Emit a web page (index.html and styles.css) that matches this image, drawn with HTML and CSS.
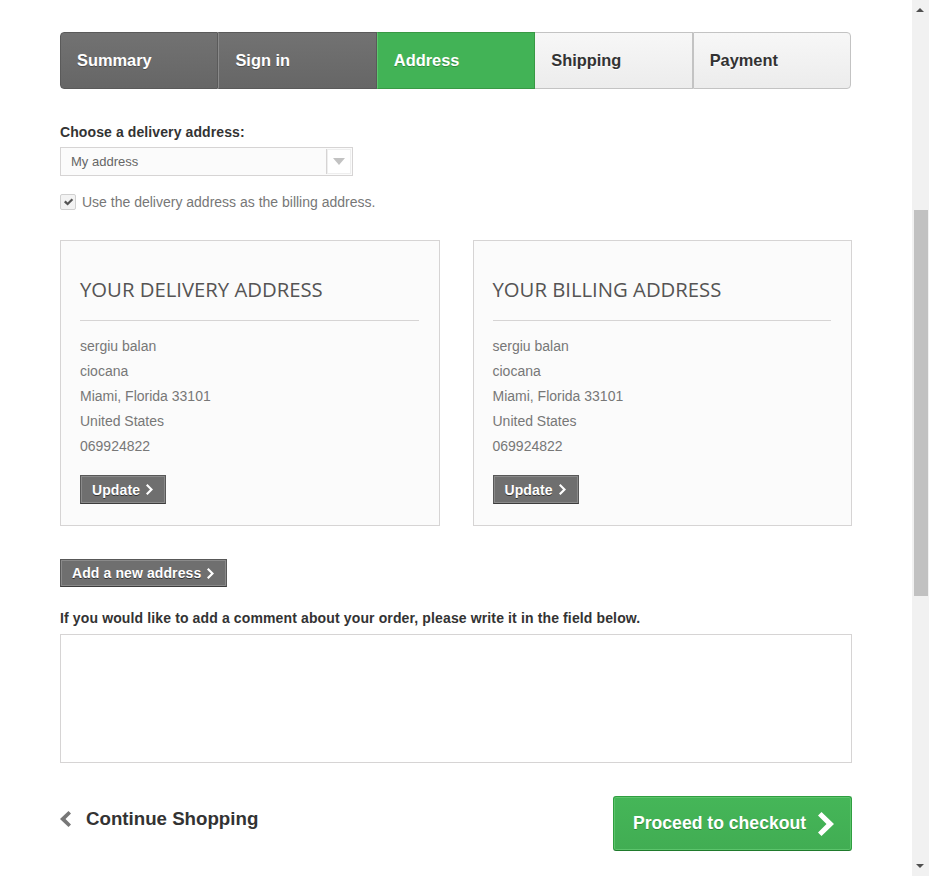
FILE: index.html
```html
<!DOCTYPE html>
<html>
<head>
<meta charset="utf-8">
<link rel="stylesheet" href="styles.css">
</head>
<body>
<div class="page">
  <ul class="steps">
    <li class="step done first">Summary</li>
    <li class="step done">Sign in</li>
    <li class="step current">Address</li>
    <li class="step todo">Shipping</li>
    <li class="step todo last">Payment</li>
  </ul>

  <label class="label">Choose a delivery address:</label>
  <div class="select">
    <span class="select-text">My address</span>
    <span class="select-arrow"><svg width="12" height="7" viewBox="0 0 12 7"><path d="M0 0h12L6 7z" fill="#c2c2c2"/></svg></span>
  </div>
  <div class="check-row">
    <span class="checkbox"><svg width="11" height="10" viewBox="0 0 11 10"><path d="M1 5.2l1.6-1.6 2 2L8.6 1.4 10.2 3 4.6 8.6z" fill="#555"/></svg></span>
    <span class="check-text">Use the delivery address as the billing address.</span>
  </div>

  <div class="addresses">
    <div class="addr-box">
      <h3 class="addr-title">Your delivery address</h3>
      <ul class="addr-lines">
        <li>sergiu balan</li>
        <li>ciocana</li>
        <li>Miami, Florida 33101</li>
        <li>United States</li>
        <li>069924822</li>
      </ul>
      <a class="btn-dark">Update <svg class="chev" width="8" height="11" viewBox="0 0 8 11"><path d="M1.5 0L0 1.5 4 5.5 0 9.5 1.5 11 7 5.5z" fill="#fff"/></svg></a>
    </div>
    <div class="addr-box">
      <h3 class="addr-title">Your billing address</h3>
      <ul class="addr-lines">
        <li>sergiu balan</li>
        <li>ciocana</li>
        <li>Miami, Florida 33101</li>
        <li>United States</li>
        <li>069924822</li>
      </ul>
      <a class="btn-dark">Update <svg class="chev" width="8" height="11" viewBox="0 0 8 11"><path d="M1.5 0L0 1.5 4 5.5 0 9.5 1.5 11 7 5.5z" fill="#fff"/></svg></a>
    </div>
  </div>

  <a class="btn-dark add-btn">Add a new address <svg class="chev" width="8" height="11" viewBox="0 0 8 11"><path d="M1.5 0L0 1.5 4 5.5 0 9.5 1.5 11 7 5.5z" fill="#fff"/></svg></a>

  <p class="comment-label">If you would like to add a comment about your order, please write it in the field below.</p>
  <div class="textarea"></div>

  <div class="footer">
    <a class="continue"><svg width="11" height="16" viewBox="0 0 11 16"><path d="M8.5 0L11 2.5 5.5 8 11 13.5 8.5 16 0 8z" fill="#777"/></svg><span>Continue Shopping</span></a>
    <a class="proceed">Proceed to checkout <svg width="16" height="24" viewBox="0 0 16 24"><path d="M3.5 0L0 3.5 8.5 12 0 20.5 3.5 24 16 12z" fill="#fff"/></svg></a>
  </div>
</div>

<div class="scrollbar">
  <span class="sb-up"></span>
  <span class="sb-thumb"></span>
  <span class="sb-down"></span>
</div>
</body>
</html>
```

FILE: styles.css
```css
html, body {
  margin: 0;
  padding: 0;
  overflow: hidden;
  background: #fff;
}
body {
  font-family: "Liberation Sans", Arial, sans-serif;
  font-size: 14px;
  color: #777;
  width: 912px;
  height: 876px;
}
.page {
  width: 792px;
  margin: 0 0 0 60px;
  padding-top: 32px;
}
.steps {
  list-style: none;
  margin: 0 1px 35px 0;
  padding: 0;
  display: flex;
  height: 57px;
}
.step {
  flex: 1;
  box-sizing: border-box;
  height: 57px;
  display: flex;
  align-items: center;
  padding-left: 16px;
  font-weight: bold;
  font-size: 16.4px;
}
.step.done {
  background: linear-gradient(#727272, #666);
  border: 1px solid #5a5a5a;
  border-left-color: #8a8a8a;
  color: #fff;
  text-shadow: 0 1px 0 #4a4a4a;
}
.step.first {
  border-left-color: #5a5a5a;
  border-radius: 4px 0 0 4px;
}
.step.current {
  background: #42b356;
  border: 1px solid #389944;
  border-left-color: #5fc46f;
  color: #fff;
  text-shadow: 0 1px 0 #2f8a3c;
}
.step.todo {
  background: linear-gradient(#f7f7f7, #ececec);
  border: 1px solid #c3c3c3;
  color: #333;
  text-shadow: 0 1px 0 #fff;
}
.step.current + .step.todo {
  border-left: 0;
}
.step.last {
  border-radius: 0 4px 4px 0;
}

.label {
  display: block;
  font-weight: bold;
  font-size: 14px;
  color: #333;
  margin: 0 0 6px;
  line-height: 17px;
  letter-spacing: 0.1px;
}
.select {
  width: 293px;
  height: 29px;
  box-sizing: border-box;
  border: 1px solid #d6d4d4;
  background: #fbfbfb;
  display: flex;
  align-items: center;
  justify-content: space-between;
}
.select-text {
  padding-left: 10px;
  font-size: 13px;
  color: #666;
}
.select-arrow {
  width: 25px;
  height: 25px;
  margin-right: 1px;
  box-sizing: border-box;
  border-left: 1px solid #d6d4d4;
  background: #fff;
  display: flex;
  align-items: center;
  justify-content: center;
  box-shadow: inset 0 0 0 1px #eee;
}
.check-row {
  display: flex;
  align-items: center;
  margin: 18px 0 0;
  height: 16px;
}
.checkbox {
  width: 14px;
  height: 14px;
  border: 1px solid #d0d0d0;
  border-radius: 2px;
  background: #f3f3f3;
  display: flex;
  align-items: center;
  justify-content: center;
  margin-right: 6px;
}
.check-text {
  color: #777;
  font-size: 14px;
}

.addresses {
  display: flex;
  gap: 33px;
  margin: 30px 0 0;
}
.addr-box {
  flex: 1;
  height: 286px;
  box-sizing: border-box;
  background: #fbfbfb;
  border: 1px solid #d6d4d4;
  padding: 35px 20px 0 19px;
}
.addr-title {
  margin: 0;
  font-family: "Open Sans", "Liberation Sans", sans-serif;
  font-weight: 400;
  font-size: 20.3px;
  text-transform: uppercase;
  color: #555454;
  line-height: 26px;
  padding-bottom: 18px;
  border-bottom: 1px solid #d6d4d4;
  margin-bottom: 13px;
}
.addr-lines {
  list-style: none;
  margin: 0 0 16px;
  padding: 0;
  line-height: 25px;
  font-size: 14px;
  color: #777;
}
.btn-dark {
  display: inline-flex;
  align-items: center;
  gap: 6px;
  box-sizing: border-box;
  height: 29px;
  padding: 0 11px;
  background: #6f6f6f;
  border: 1px solid #585858;
  box-shadow: inset 0 0 0 1px #8a8a8a;
  border-bottom-color: #3c3c3c;
  color: #fff;
  font-weight: bold;
  font-size: 14px;
  letter-spacing: 0.1px;
  text-shadow: 0 1px 0 #333;
}
.add-btn {
  margin: 33px 0 0;
  height: 28px;
  padding: 0 11px;
}
.comment-label {
  margin: 23px 0 7px;
  font-weight: bold;
  color: #333;
  font-size: 14px;
  line-height: 17px;
  letter-spacing: 0.13px;
}
.textarea {
  height: 129px;
  box-sizing: border-box;
  border: 1px solid #d6d4d4;
  background: #fff;
}
.footer {
  display: flex;
  justify-content: space-between;
  align-items: center;
  margin: 33px 0 0;
}
.continue {
  display: flex;
  align-items: center;
  gap: 15px;
  font-size: 18.7px;
  font-weight: bold;
  color: #333;
  margin-top: -9px;
}
.proceed {
  display: flex;
  align-items: center;
  gap: 12px;
  box-sizing: border-box;
  width: 239px;
  height: 55px;
  padding-left: 19px;
  background: linear-gradient(#45b658, #41ad53);
  border: 1px solid #2f9e40;
  border-bottom-color: #1f7a2c;
  box-shadow: inset 0 0 0 1px #5cc46c;
  border-radius: 3px;
  color: #fff;
  font-weight: bold;
  font-size: 17.6px;
  text-shadow: 0 1px 0 #2b8a38;
}

.scrollbar {
  position: fixed;
  top: 0;
  right: 0;
  width: 17px;
  height: 876px;
  background: #f1f1f1;
}
.sb-up, .sb-down {
  position: absolute;
  left: 4px;
  width: 0;
  height: 0;
  border-left: 4px solid transparent;
  border-right: 4px solid transparent;
}
.sb-up {
  top: 8px;
  border-bottom: 4px solid #505050;
}
.sb-down {
  bottom: 8px;
  border-top: 4px solid #505050;
}
.sb-thumb {
  position: absolute;
  left: 2px;
  width: 14px;
  top: 210px;
  height: 386px;
  background: #c1c1c1;
}
```
